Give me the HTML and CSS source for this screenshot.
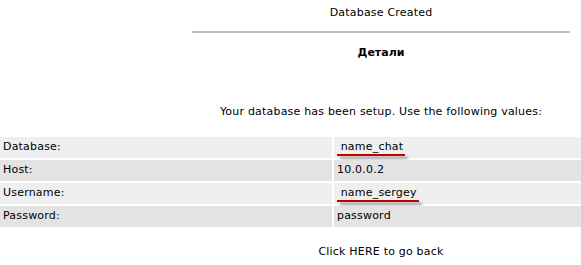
FILE: index.html
```html
<!DOCTYPE html>
<html lang="ru">
<head>
  <meta charset="UTF-8" />
  <title>Database Created</title>
  <link rel="stylesheet" href="styles.css">
</head>
<body>
  <div class="head">
    <div class="title">Database Created</div>
    <div class="rule"></div>
    <div class="sub">Детали</div>
    <div class="note">Your database has been setup. Use the following values:</div>
  </div>

  <div class="values">
    <div class="cell odd">Database:</div>
    <div class="cell odd val"> name_chat<span class="mark mark-db"></span></div>
    <div class="cell even">Host:</div>
    <div class="cell even val">10.0.0.2</div>
    <div class="cell odd">Username:</div>
    <div class="cell odd val"> name_sergey<span class="mark mark-user"></span></div>
    <div class="cell even">Password:</div>
    <div class="cell even val">password</div>
  </div>

  <div class="head">
    <div class="back">Click HERE to go back</div>
  </div>
</body>
</html>
```

FILE: styles.css
```css
body {
  margin: 0;
  font-family: "DejaVu Sans", Verdana, sans-serif;
  font-size: 11px;
  letter-spacing: 0.2px;
  color: #000;
  background: #fff;
}
.head {
  margin-left: 192px;
  width: 378px;
  text-align: center;
  line-height: 14px;
}
.title {
  padding-top: 6px;
}
.rule {
  height: 2px;
  margin-top: 11px;
  background: #c0c0c0;
}
.sub {
  margin-top: 13px;
  font-weight: bold;
  letter-spacing: 0;
}
.note {
  margin-top: 45px;
}
.values {
  display: grid;
  grid-template-columns: 332px 1fr;
  column-gap: 2px;
  row-gap: 2px;
  margin-top: 18px;
}
.cell {
  height: 21px;
  line-height: 20px;
  padding-left: 3px;
  white-space: pre;
}
.val {
  position: relative;
  padding-left: 3px;
}
.odd {
  background: #efefef;
}
.even {
  background: #e3e3e3;
}
.mark {
  position: absolute;
  left: 3px;
  top: 17px;
  height: 2px;
  background: #c00000;
  box-shadow: 3px 3px 3px rgba(0,0,0,0.45);
}
.mark-db {
  width: 68px;
}
.mark-user {
  width: 82px;
}
.back {
  margin-top: 18px;
}
```
